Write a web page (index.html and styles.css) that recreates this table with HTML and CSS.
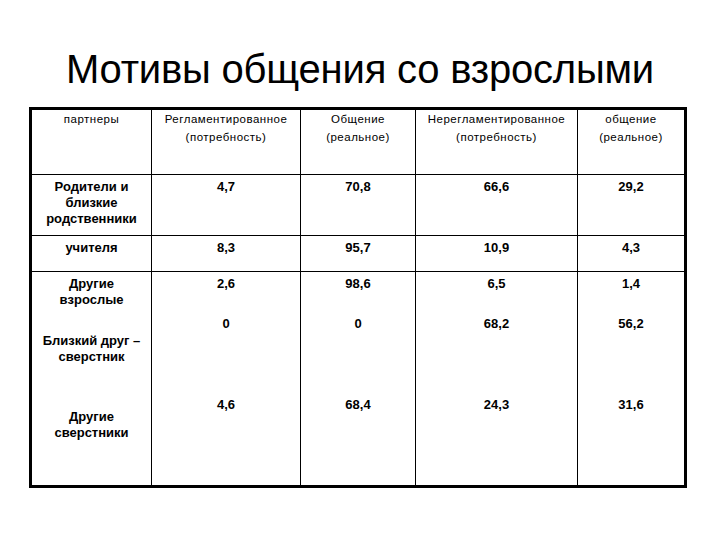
FILE: index.html
```html
<!DOCTYPE html>
<html lang="ru">
<head>
<meta charset="utf-8">
<link rel="stylesheet" href="styles.css">
</head>
<body>
<div class="slide">
  <h1 class="title">Мотивы общения со взрослыми</h1>
  <table class="grid">
    <colgroup>
      <col class="c1"><col class="c2"><col class="c3"><col class="c4"><col class="c5">
    </colgroup>
    <tr class="head">
      <td>партнеры</td>
      <td>Регламентированное<br>(потребность)</td>
      <td>Общение<br>(реальное)</td>
      <td>Нерегламентированное<br>(потребность)</td>
      <td>общение<br>(реальное)</td>
    </tr>
    <tr class="r1">
      <td>Родители и<br>близкие<br>родственники</td>
      <td>4,7</td><td>70,8</td><td>66,6</td><td>29,2</td>
    </tr>
    <tr class="r2">
      <td>учителя</td>
      <td>8,3</td><td>95,7</td><td>10,9</td><td>4,3</td>
    </tr>
    <tr class="r3">
      <td>
        <div class="lab a">Другие<br>взрослые</div>
        <div class="lab b">Близкий друг –<br>сверстник</div>
        <div class="lab c">Другие<br>сверстники</div>
      </td>
      <td><div class="v a">2,6</div><div class="v b">0</div><div class="v c">4,6</div></td>
      <td><div class="v a">98,6</div><div class="v b">0</div><div class="v c">68,4</div></td>
      <td><div class="v a">6,5</div><div class="v b">68,2</div><div class="v c">24,3</div></td>
      <td><div class="v a">1,4</div><div class="v b">56,2</div><div class="v c">31,6</div></td>
    </tr>
  </table>
</div>
</body>
</html>
```
FILE: styles.css
```css
html, body {
  margin: 0;
  padding: 0;
  background: #fff;
}
.slide {
  width: 720px;
  height: 540px;
  padding-top: 1px;
  box-sizing: border-box;
  font-family: "Liberation Sans", Arial, sans-serif;
  color: #000;
}
.title {
  margin: 40px 0 0 0;
  font-weight: normal;
  font-size: 40px;
  line-height: 56px;
  text-align: center;
  letter-spacing: -0.2px;
}
.grid {
  margin: 10px 0 0 29px;
  width: 655px;
  border-collapse: collapse;
  table-layout: fixed;
  border: 3px solid #000;
}
.c1 { width: 121px; }
.c2 { width: 149px; }
.c3 { width: 115px; }
.c4 { width: 162px; }
.c5 { width: 108px; }
.grid td {
  border: 1px solid #000;
  text-align: center;
  vertical-align: top;
  padding: 0;
}
.head td {
  height: 66px;
  font-size: 11.5px;
  line-height: 18px;
  letter-spacing: 0.5px;
  padding-top: 0;
  box-sizing: border-box;
}
.r1 td, .r2 td, .r3 td {
  font-weight: bold;
  font-size: 13px;
  line-height: 16px;
}
.r1 td {
  height: 61px;
  padding-top: 4px;
  box-sizing: border-box;
}
.r2 td {
  height: 36px;
  padding-top: 4px;
  box-sizing: border-box;
}
.r3 td {
  height: 215px;
  padding-top: 4px;
  box-sizing: border-box;
}
.lab.b { margin-top: 25px; }
.lab.c { margin-top: 44px; }
.v.b { margin-top: 24px; }
.v.c { margin-top: 65px; }
```
